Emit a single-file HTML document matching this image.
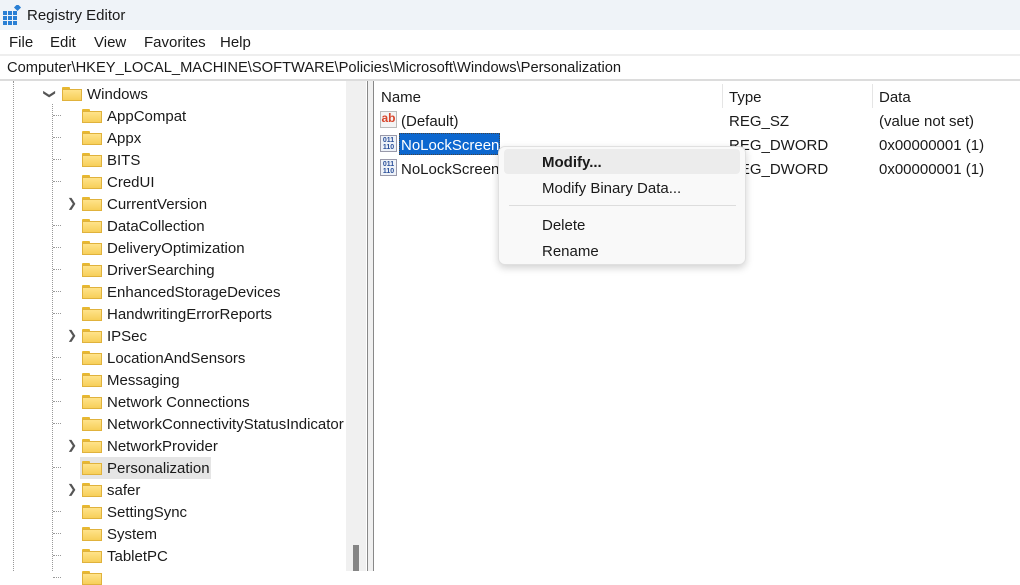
<!DOCTYPE html>
<html><head><style>
body{margin:0;width:1020px;height:571px;overflow:hidden;background:#fff;font-family:"Liberation Sans",sans-serif;font-size:15px;color:#1a1a1a;position:relative}
.a{position:absolute;white-space:nowrap}
.fold{position:absolute;width:20px;height:14px}
.fold:before{content:"";position:absolute;left:0;top:0;width:8px;height:4px;background:#e8b830;border-radius:1px 1px 0 0}
.fold:after{content:"";position:absolute;left:0;top:2px;width:20px;height:12px;background:linear-gradient(#ffe38a,#f7cf5a);border:1px solid #e0b23c;box-sizing:border-box}
.chev{position:absolute;font-size:12px;color:#555}
.dot{position:absolute;border-left:1px dotted #999}
.hd{position:absolute;border-top:1px dotted #999;width:8px}
</style></head><body>
<div class="a" style="left:0;top:0;width:1020px;height:30px;background:#eff3f8"></div>
<svg class="a" style="left:3px;top:5px" width="20" height="20" viewBox="0 0 20 20"><g fill="#2a7fd4"><rect x="0" y="6" width="4" height="4"/><rect x="5" y="6" width="4" height="4"/><rect x="10" y="6" width="4" height="4"/><rect x="0" y="11" width="4" height="4"/><rect x="5" y="11" width="4" height="4"/><rect x="10" y="11" width="4" height="4"/><rect x="0" y="16" width="4" height="4"/><rect x="5" y="16" width="4" height="4"/><rect x="10" y="16" width="4" height="4"/><rect x="12" y="0" width="5" height="5" transform="rotate(45 14.5 2.5)"/></g></svg>
<div class="a" style="left:27px;top:7px;font-size:15px">Registry Editor</div>
<div class="a" style="left:0;top:30px;width:1020px;height:24px;background:#fff"></div>
<div class="a" style="left:9px;top:34px">File</div>
<div class="a" style="left:50px;top:34px">Edit</div>
<div class="a" style="left:94px;top:34px">View</div>
<div class="a" style="left:144px;top:34px">Favorites</div>
<div class="a" style="left:220px;top:34px">Help</div>
<div class="a" style="left:0;top:54px;width:1020px;height:2px;background:#eee"></div>
<div class="a" style="left:7px;top:60px;font-size:14.7px">Computer\HKEY_LOCAL_MACHINE\SOFTWARE\Policies\Microsoft\Windows\Personalization</div>
<div class="a" style="left:0;top:79px;width:1020px;height:2px;background:#dcdcdc"></div>
<div class="a" style="left:346px;top:81px;width:20px;height:490px;background:#f0f0f0"></div>
<div class="a" style="left:353px;top:545px;width:6px;height:26px;background:#858585"></div>
<div class="a" style="left:367px;top:81px;width:1px;height:490px;background:#888"></div>
<div class="a" style="left:368px;top:81px;width:5px;height:490px;background:#f0f0f0"></div>
<div class="a" style="left:373px;top:81px;width:1px;height:490px;background:#888"></div>
<div class="dot" style="left:13px;top:81px;height:490px"></div>
<div class="dot" style="left:52px;top:104px;height:467px"></div>
<div class="a" style="left:80px;top:457px;width:131px;height:22px;background:#e5e5e5"></div>
<div class="chev" style="left:45px;top:87px;transform:rotate(90deg)">❯</div>
<div class="fold" style="left:62px;top:87px"></div>
<div class="a" style="left:87px;top:86px">Windows</div>
<div id="tree"></div>
<script>
var n=["AppCompat","Appx","BITS","CredUI","CurrentVersion","DataCollection","DeliveryOptimization","DriverSearching","EnhancedStorageDevices","HandwritingErrorReports","IPSec","LocationAndSensors","Messaging","Network Connections","NetworkConnectivityStatusIndicator","NetworkProvider","Personalization","safer","SettingSync","System","TabletPC",""];
var ch={CurrentVersion:1,IPSec:1,NetworkProvider:1,safer:1};
var h="";n.forEach(function(s,i){var y=115+22*i;
if(ch[s])h+='<div class="chev" style="left:67px;top:'+(y-7)+'px">❯</div>';else h+='<div class="hd" style="left:53px;top:'+y+'px"></div>';
h+='<div class="fold" style="left:82px;top:'+(y-6)+'px"></div><div class="a" style="left:107px;top:'+(y-7)+'px">'+s+'</div>';});
document.getElementById("tree").outerHTML=h;
</script>
<div class="a" style="left:381px;top:89px">Name</div>
<div class="a" style="left:722px;top:84px;width:1px;height:24px;background:#e5e5e5"></div>
<div class="a" style="left:729px;top:89px">Type</div>
<div class="a" style="left:872px;top:84px;width:1px;height:24px;background:#e5e5e5"></div>
<div class="a" style="left:879px;top:89px">Data</div>
<div class="a" style="left:380px;top:111px;width:17px;height:17px;background:#f4f4f4;border:1px solid #bbb;box-sizing:border-box;color:#d8452b;font-weight:bold;font-size:12px;line-height:13px;text-align:center">ab</div>
<div class="a" style="left:401px;top:113px">(Default)</div>
<div class="a" style="left:729px;top:113px">REG_SZ</div>
<div class="a" style="left:879px;top:113px">(value not set)</div>
<div class="a" style="left:380px;top:135px;width:17px;height:17px;background:#eef2f8;border:1px solid #99a;box-sizing:border-box;color:#2a4f9a;font-weight:bold;font-size:7px;line-height:7px;text-align:center;padding-top:1px">011<br>110</div>
<div class="a" style="left:399px;top:133px;width:101px;height:22px;background:#0c67cf;border:1px dotted #444;box-sizing:border-box"></div>
<div class="a" style="left:401px;top:137px;color:#fff">NoLockScreen</div>
<div class="a" style="left:729px;top:137px">REG_DWORD</div>
<div class="a" style="left:879px;top:137px">0x00000001 (1)</div>
<div class="a" style="left:380px;top:159px;width:17px;height:17px;background:#eef2f8;border:1px solid #99a;box-sizing:border-box;color:#2a4f9a;font-weight:bold;font-size:7px;line-height:7px;text-align:center;padding-top:1px">011<br>110</div>
<div class="a" style="left:401px;top:161px">NoLockScreenCamera</div>
<div class="a" style="left:729px;top:161px">REG_DWORD</div>
<div class="a" style="left:879px;top:161px">0x00000001 (1)</div>
<div class="a" style="left:498px;top:146px;width:248px;height:119px;background:#f9f9f9;border:1px solid #e0e0e0;border-radius:7px;box-shadow:0 3px 8px rgba(0,0,0,.18);box-sizing:border-box">
<div class="a" style="left:5px;top:2px;width:236px;height:25px;background:#ececec;border-radius:4px"></div>
<div class="a" style="left:43px;top:7px;font-weight:bold">Modify...</div>
<div class="a" style="left:43px;top:33px">Modify Binary Data...</div>
<div class="a" style="left:10px;top:58px;width:227px;height:1px;background:#ddd"></div>
<div class="a" style="left:43px;top:70px">Delete</div>
<div class="a" style="left:43px;top:96px">Rename</div>
</div>
</body></html>
